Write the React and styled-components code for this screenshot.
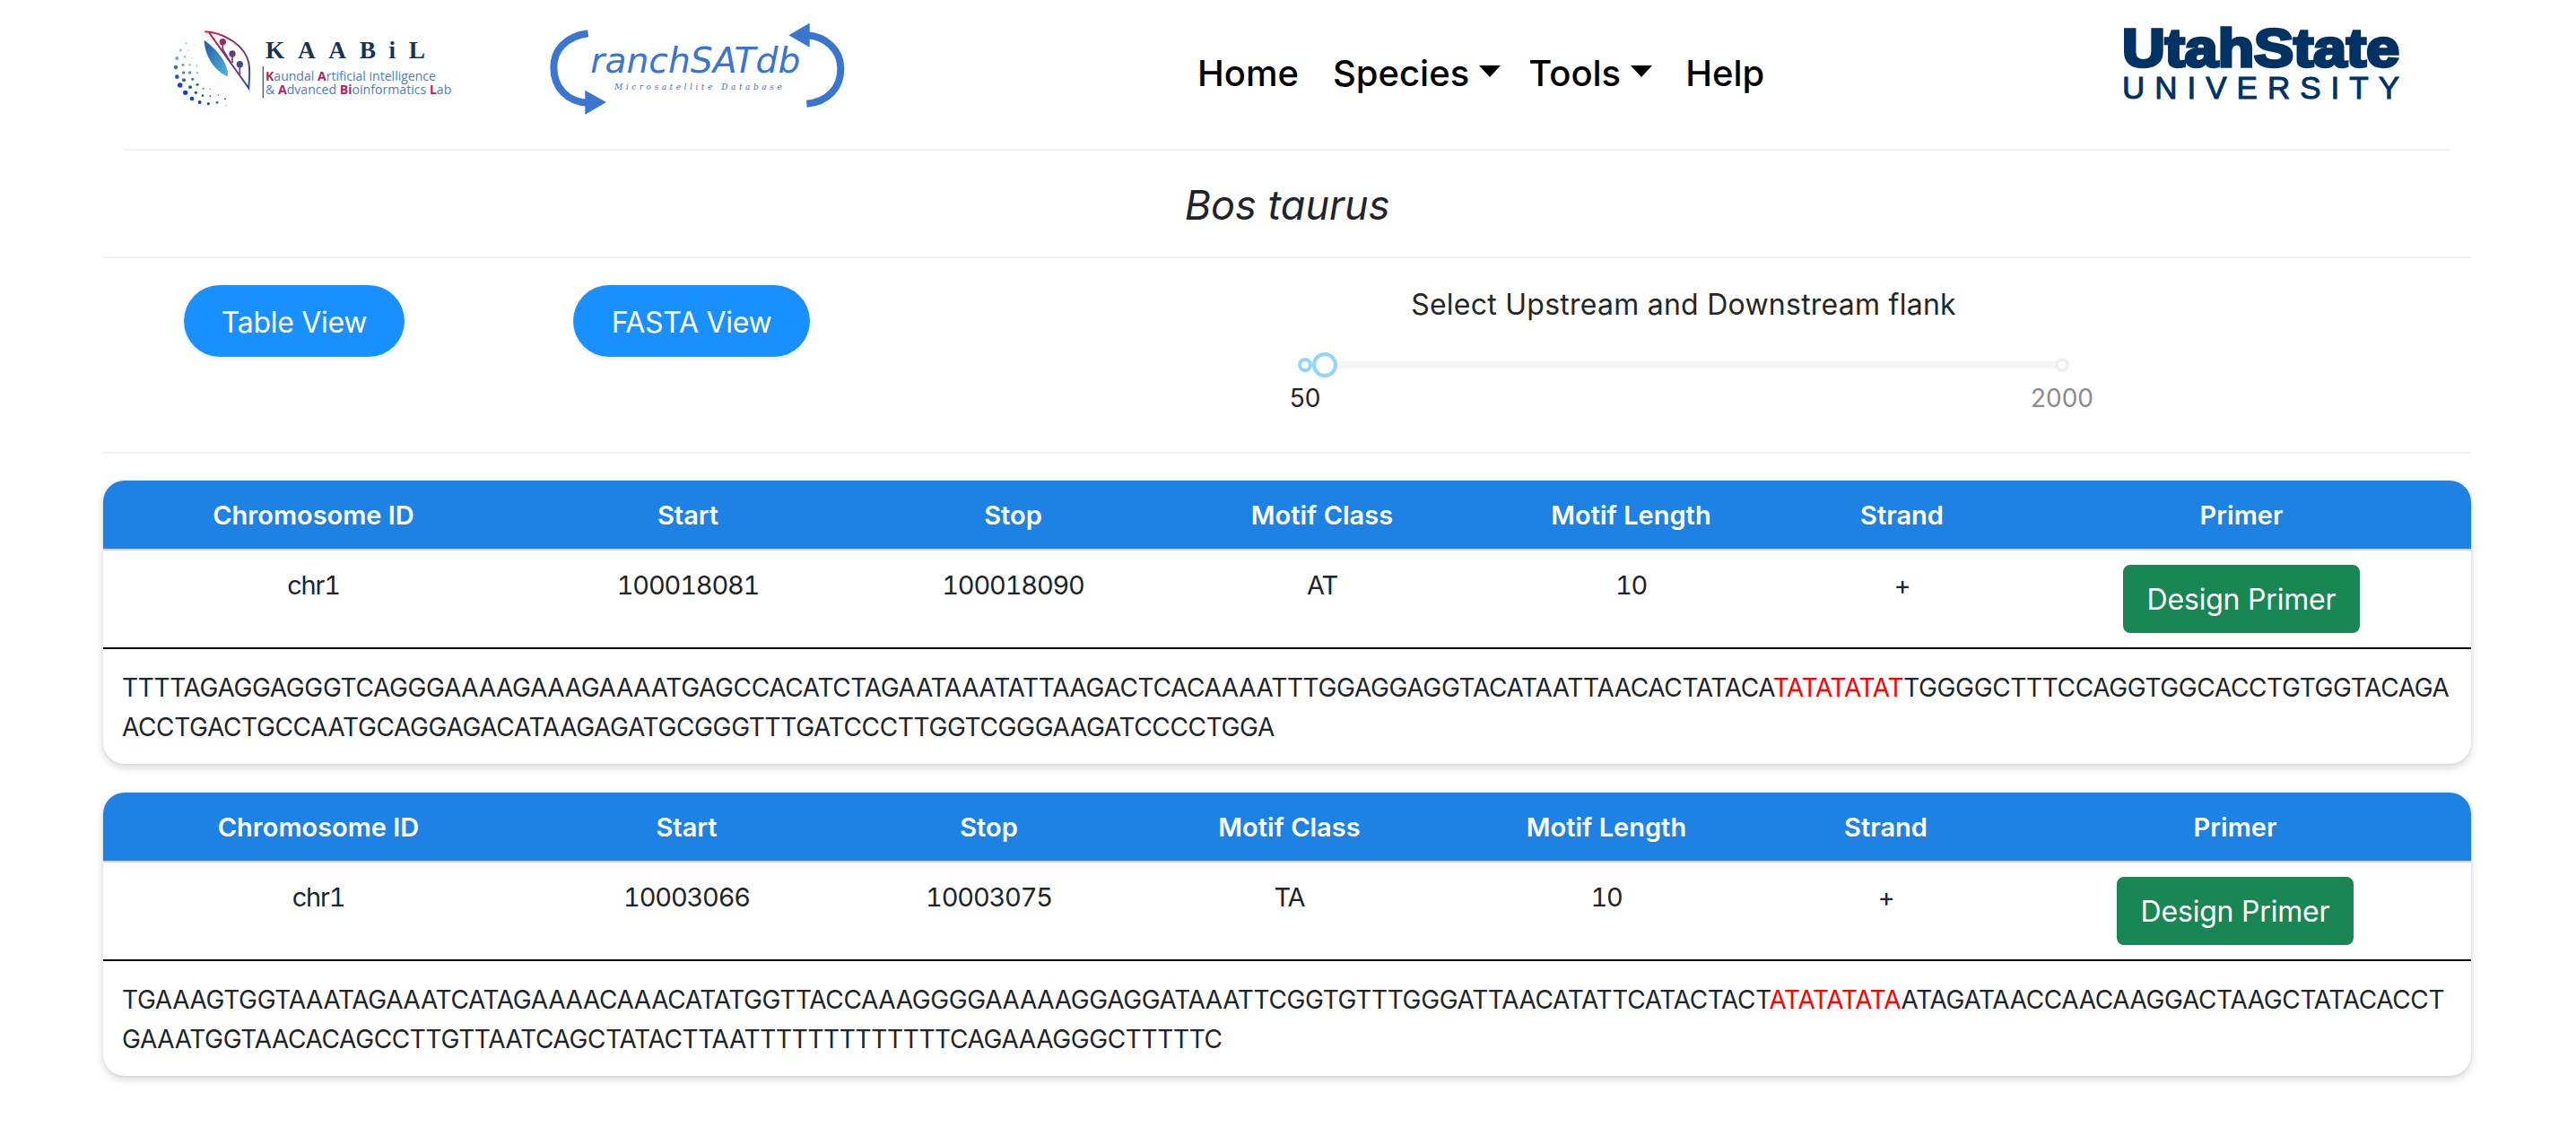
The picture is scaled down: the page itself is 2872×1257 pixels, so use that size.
import React from 'react'
import styled, { createGlobalStyle } from 'styled-components'

const GlobalStyle = createGlobalStyle`
  html, body {
    margin: 0;
    padding: 0;
    background: #ffffff;
    font-family: Inter, "Liberation Sans", sans-serif;
  }
  * {
    box-sizing: border-box;
  }
`

const Page = styled.div`
  width: 2872px;
  height: 1257px;
  overflow: hidden;
  padding: 0 117px 0 115px;
`

const NavBar = styled.nav`
  height: 168px;
  margin: 0 24px;
  padding-left: 41px;
  display: flex;
  align-items: flex-start;
  border-bottom: 2px solid #f0f0f0;
`

const LogoBox = styled.div`
  flex: none;
  margin-top: ${(props) => props.$top}px;
  margin-left: ${(props) => props.$left}px;
  height: ${(props) => props.$height}px;
  width: ${(props) => props.$width}px;

  & svg {
    display: block;
  }
`

const NavLinks = styled.div`
  display: flex;
  align-items: center;
  height: 48px;
  margin-top: 57px;
  margin-left: 365px;
  flex: none;
  width: 1027px;
`

const NavLink = styled.a`
  font-size: 40px;
  font-weight: 500;
  color: #000000;
  margin-right: ${(props) => props.$gap}px;
  display: flex;
  align-items: center;
`

const Caret = styled.span`
  width: 0;
  height: 0;
  margin-left: 11px;
  margin-top: -4px;
  border-left: 12px solid transparent;
  border-right: 12px solid transparent;
  border-top: 13px solid #000000;
`

const Title = styled.h1`
  margin: 0;
  height: 120px;
  padding-top: 2px;
  display: flex;
  align-items: center;
  justify-content: center;
  font-size: 45px;
  font-style: italic;
  font-weight: 400;
  color: #212529;
  border-bottom: 2px solid #f0f0f0;
`

const Controls = styled.section`
  height: 218px;
  padding: 30px 436px 0 90px;
  display: flex;
  align-items: flex-start;
  border-bottom: 2px solid #f0f0f0;
`

const ViewButton = styled.button`
  height: 80px;
  width: ${(props) => props.$width}px;
  margin-right: ${(props) => props.$gap}px;
  padding: 2px 0 0;
  flex: none;
  border: 0;
  border-radius: 40px;
  background: #1890ff;
  color: #ffffff;
  font-family: inherit;
  font-size: 32px;
  letter-spacing: -0.3px;
  box-shadow: 0 4px 0 rgba(0, 0, 0, 0.045);
`

const Flank = styled.div`
  flex: 1;
  padding-top: 2px;
`

const FlankLabel = styled.div`
  text-align: center;
  font-size: 32px;
  letter-spacing: 0.25px;
  line-height: 40px;
  color: #262626;
`

const Slider = styled.div`
  position: relative;
  margin: 43px 20px 0;
  height: 8px;
  background: #f5f5f5;
  border-radius: 4px;
`

const Dot = styled.span`
  position: absolute;
  top: -4px;
  left: ${(props) => props.$at};
  width: 16px;
  height: 16px;
  margin-left: -8px;
  border-radius: 50%;
  background: #ffffff;
  border: 4px solid ${(props) => (props.$active ? '#91d5ff' : '#f0f0f0')};
`

const Handle = styled.span`
  position: absolute;
  top: -10px;
  left: 8px;
  width: 28px;
  height: 28px;
  border-radius: 50%;
  background: #ffffff;
  border: 4px solid #91d5ff;
`

const Mark = styled.span`
  position: absolute;
  top: 21px;
  left: ${(props) => props.$at};
  transform: translateX(-50%);
  font-size: 28px;
  line-height: 40px;
  color: ${(props) => (props.$muted ? '#8c8c8c' : '#262626')};
`

const Card = styled.article`
  margin-top: ${(props) => props.$top}px;
  height: 316px;
  border-radius: 24px;
  background: #ffffff;
  overflow: hidden;
  box-shadow: 0 4px 10px rgba(0, 0, 0, 0.16), 0 0 3px rgba(0, 0, 0, 0.08);
`

const Table = styled.table`
  width: 100%;
  table-layout: fixed;
  border-collapse: collapse;
  font-size: 29px;
  color: #212529;
`

const Col = styled.col`
  width: ${(props) => props.$width}px;
`

const Th = styled.th`
  background: #1e82e4;
  color: #ffffff;
  font-weight: 600;
  line-height: 42px;
  padding: 18px 0 16px;
  text-align: center;
  border-bottom: 2px solid #d6d3cc;
`

const Td = styled.td`
  padding: 18px 0 14px;
  line-height: 42px;
  text-align: center;
  vertical-align: top;
  font-variant-numeric: tabular-nums;
  letter-spacing: -1.2px;
  border-bottom: 2px solid #000000;
`

const ButtonCell = styled(Td)`
  padding: 16px 0;
  letter-spacing: normal;
`

const PrimerButton = styled.button`
  height: 76px;
  width: 264px;
  padding: 0;
  border: 2px solid #198754;
  border-radius: 8px;
  background: #198754;
  color: #ffffff;
  font-family: inherit;
  font-size: 32px;
  letter-spacing: -0.2px;
  display: block;
  margin: 0 auto;
`

const Sequence = styled.div`
  padding: 21px 20px 0 21px;
  font-size: 28px;
  letter-spacing: -0.36px;
  line-height: 44px;
  color: #212529;
  word-break: break-all;
`

const Motif = styled.span`
  color: #ff0000;
`

const COLUMNS = ['Chromosome ID', 'Start', 'Stop', 'Motif Class', 'Motif Length', 'Strand', 'Primer']

const RECORDS = [
  {
    widths: [469, 366, 359, 330, 359, 245, 512],
    chrom: 'chr1',
    start: '100018081',
    stop: '100018090',
    motifClass: 'AT',
    length: '10',
    strand: '+',
    before: 'TTTTAGAGGAGGGTCAGGGAAAAGAAAGAAAATGAGCCACATCTAGAATAAATATTAAGACTCACAAAATTTGGAGGAGGTACATAATTAACACTATACA',
    motif: 'TATATATAT',
    after:
      'TGGGGCTTTCCAGGTGGCACCTGTGGTACAGAACCTGACTGCCAATGCAGGAGACATAAGAGATGCGGGTTTGATCCCTTGGTCGGGAAGATCCCCTGGA',
  },
  {
    widths: [480, 341, 333, 337, 370, 253, 526],
    chrom: 'chr1',
    start: '10003066',
    stop: '10003075',
    motifClass: 'TA',
    length: '10',
    strand: '+',
    before: 'TGAAAGTGGTAAATAGAAATCATAGAAAACAAACATATGGTTACCAAAGGGGAAAAAGGAGGATAAATTCGGTGTTTGGGATTAACATATTCATACTACT',
    motif: 'ATATATATA',
    after:
      'ATAGATAACCAACAAGGACTAAGCTATACACCTGAAATGGTAACACAGCCTTGTTAATCAGCTATACTTAATTTTTTTTTTTTTCAGAAAGGGCTTTTTC',
  },
]

const DOTS = [
  [62, 225, 8, '#1740c8'], [80, 250, 8, '#1740c8'], [102, 270, 7, '#1740c8'], [128, 282, 6, '#1740c8'],
  [157, 287, 5, '#2050c8'], [186, 283, 4, '#2050c8'], [213, 271, 3, '#2a62c0'], [215, 293, 2, '#9a9a9a'],
  [48, 165, 7, '#3d6fd0'], [52, 197, 7, '#2a58c8'], [75, 208, 6, '#2a60b8'], [96, 232, 6, '#1f5cb0'],
  [115, 250, 5, '#1f5cb0'], [138, 260, 4, '#1f5cb0'], [163, 262, 3, '#1f5cb0'], [190, 258, 2, '#1f5cb0'],
  [52, 135, 6, '#7f9fe0'], [72, 157, 5, '#7f9fc8'], [74, 183, 5, '#4f7fa8'], [95, 183, 5, '#4f9a90'],
  [104, 205, 5, '#3f8a80'], [120, 223, 5, '#2a7a80'], [140, 236, 3, '#2f8a60'], [163, 238, 2, '#2f8a60'],
  [64, 108, 5, '#a8bfe8'], [78, 130, 4, '#a8c0d8'], [95, 157, 4, '#a0c8c0'], [118, 160, 3, '#90c890'],
  [120, 184, 3, '#70b870'], [103, 133, 2, '#b8d8c8'], [91, 108, 3, '#c8d8e8'], [82, 85, 4, '#c0cff0'],
  [110, 90, 2, '#d8e0f0'], [105, 65, 2, '#d8e0f0'],
]

const KaabilLogo = () => (
  <svg width="340" height="110" viewBox="0 0 1020 330">
    <defs>
      <linearGradient id="leafEdge" x1="0" y1="0" x2="1" y2="1">
        <stop offset="0" stopColor="#e0143c" />
        <stop offset="0.5" stopColor="#8a2f78" />
        <stop offset="1" stopColor="#1f5a9c" />
      </linearGradient>
      <linearGradient id="leafBlade" x1="0" y1="0" x2="1" y2="1">
        <stop offset="0" stopColor="#1d5aa5" />
        <stop offset="1" stopColor="#55b8de" />
      </linearGradient>
    </defs>
    {DOTS.map(([cx, cy, r, fill]) => (
      <circle key={`${cx}-${cy}`} cx={cx} cy={cy} r={r} fill={fill} />
    ))}
    <path d="M143 75C178 98 226 150 222 196C180 180 145 130 143 75Z" fill="url(#leafBlade)" />
    <path d="M145 46C215 50 280 95 292 150C298 185 292 215 292 235L160 50" fill="none" stroke="url(#leafEdge)" strokeWidth="6" />
    <path d="M205 80V105L232 150M237 120V150M262 155V190" fill="none" stroke="#6a3a80" strokeWidth="5" />
    <circle cx="205" cy="80" r="11" fill="#a02864" />
    <circle cx="237" cy="120" r="11" fill="#6a3a80" />
    <circle cx="262" cy="155" r="11" fill="#3e4d8a" />
    <text x="348" y="134" textLength="534" fill="#1a3350" fontFamily="Liberation Serif" fontWeight="700" fontSize="82">
      KAABiL
    </text>
    <rect x="338" y="162" width="4" height="106" fill="#4c5c70" />
    <text x="348" y="211" textLength="570" lengthAdjust="spacingAndGlyphs" fill="#4a80c0" fontFamily="Open Sans" fontSize="41">
      <tspan fill="#b0245f" fontWeight="700">K</tspan>aundal <tspan fill="#b0245f" fontWeight="700">A</tspan>rtificial intelligence
    </text>
    <text x="348" y="256" textLength="622" lengthAdjust="spacingAndGlyphs" fill="#4a80c0" fontFamily="Open Sans" fontSize="41">
      &amp; <tspan fill="#b0245f" fontWeight="700">A</tspan>dvanced <tspan fill="#b0245f" fontWeight="700">Bi</tspan>oinformatics <tspan fill="#b0245f" fontWeight="700">L</tspan>ab
    </text>
  </svg>
)

const BranchLogo = () => (
  <svg width="380" height="130" viewBox="0 0 1140 390">
    <g fill="none" stroke="#3a75d0" strokeWidth="24">
      <path d="M197 82C120 92 82 140 82 195C82 265 130 312 195 314" />
      <path d="M928 317C1000 312 1042 262 1042 200C1042 135 990 92 930 88" />
    </g>
    <path d="M187 272L258 312L187 353Z" fill="#3a75d0" />
    <path d="M868 88L938 47V128Z" fill="#3a75d0" />
    <text x="205" y="213" textLength="702" lengthAdjust="spacingAndGlyphs" fill="#3a75d0" fontFamily="DejaVu Sans" fontStyle="italic" fontSize="118">
      ranchSATdb
    </text>
    <text x="285" y="269" textLength="560" fill="#3a75d0" fontFamily="DejaVu Serif" fontStyle="italic" fontSize="27">
      Microsatellite Database
    </text>
  </svg>
)

const UtahLogo = () => (
  <svg width="320" height="100" viewBox="0 0 320 100">
    <text x="4" y="58" textLength="309" lengthAdjust="spacingAndGlyphs" fill="#003263" stroke="#003263" strokeWidth="3.5" fontFamily="Liberation Sans" fontWeight="700" fontSize="60">
      UtahState
    </text>
    <text x="4" y="94" textLength="309" fill="#003263" stroke="#003263" strokeWidth="1" fontFamily="Liberation Sans" fontSize="35">
      UNIVERSITY
    </text>
  </svg>
)

const RecordCard = ({ record, top }) => (
  <Card $top={top}>
    <Table>
      <colgroup>
        {record.widths.map((width, index) => (
          <Col key={COLUMNS[index]} $width={width} />
        ))}
      </colgroup>
      <thead>
        <tr>
          {COLUMNS.map((column) => (
            <Th key={column}>{column}</Th>
          ))}
        </tr>
      </thead>
      <tbody>
        <tr>
          <Td>{record.chrom}</Td>
          <Td>{record.start}</Td>
          <Td>{record.stop}</Td>
          <Td>{record.motifClass}</Td>
          <Td>{record.length}</Td>
          <Td>{record.strand}</Td>
          <ButtonCell>
            <PrimerButton>Design Primer</PrimerButton>
          </ButtonCell>
        </tr>
      </tbody>
    </Table>
    <Sequence>
      {record.before}
      <Motif>{record.motif}</Motif>
      {record.after}
    </Sequence>
  </Card>
)

const App = () => (
  <Page>
    <GlobalStyle />
    <NavBar>
      <LogoBox $top={20} $left={0} $width={340} $height={110}>
        <KaabilLogo />
      </LogoBox>
      <LogoBox $top={10} $left={70} $width={380} $height={130}>
        <BranchLogo />
      </LogoBox>
      <NavLinks>
        <NavLink $gap={38}>Home</NavLink>
        <NavLink $gap={31}>
          Species
          <Caret />
        </NavLink>
        <NavLink $gap={37}>
          Tools
          <Caret />
        </NavLink>
        <NavLink $gap={0}>Help</NavLink>
      </NavLinks>
      <LogoBox $top={16} $left={0} $width={320} $height={100}>
        <UtahLogo />
      </LogoBox>
    </NavBar>
    <Title>Bos taurus</Title>
    <Controls>
      <ViewButton $width={246} $gap={188}>
        Table View
      </ViewButton>
      <ViewButton $width={264} $gap={532}>
        FASTA View
      </ViewButton>
      <Flank>
        <FlankLabel>Select Upstream and Downstream flank</FlankLabel>
        <Slider>
          <Dot $at="0%" $active />
          <Dot $at="100%" />
          <Handle />
          <Mark $at="0%">50</Mark>
          <Mark $at="100%" $muted>
            2000
          </Mark>
        </Slider>
      </Flank>
    </Controls>
    <RecordCard record={RECORDS[0]} top={30} />
    <RecordCard record={RECORDS[1]} top={32} />
  </Page>
)

export default App
